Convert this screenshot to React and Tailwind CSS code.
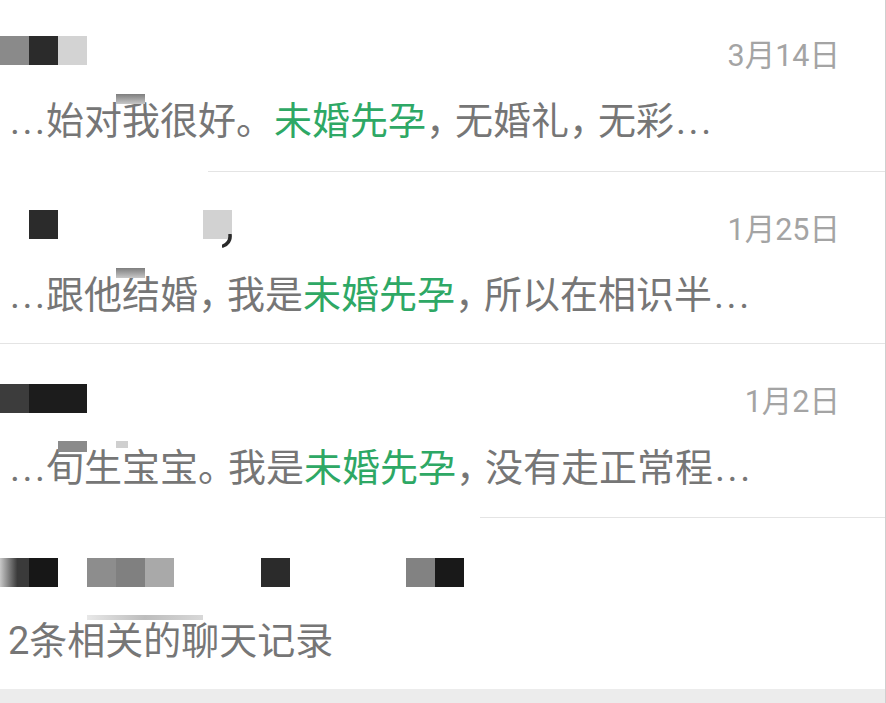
import React from "react";

const G = "text-[#2ea865]";

function Blocks({ cells }) {
  return (
    <div className="flex h-[29px]">
      {cells.map((c, i) => (
        <div key={i} className="w-[29px] h-[29px]" style={{ background: c || "transparent" }} />
      ))}
    </div>
  );
}

function C() {
  return <span className="tracking-[-9px]">，</span>;
}

function Ell() {
  return <span className="inline-block w-[38px] pl-[2px] tracking-[2.5px] font-['Roboto',sans-serif]">...</span>;
}

export default function App() {
  return (
    <div className="w-[886px] h-[703px] bg-white overflow-hidden relative border-r border-[#cfcfcf] font-['Roboto','Noto_Sans_CJK_SC',sans-serif] flex flex-col">
      {/* Row 1 */}
      <div className="relative h-[171px] pt-[36px] pl-0 pr-[45px] shrink-0">
        <div className="flex justify-between items-start h-[40px]">
          <Blocks cells={["#8a8a8a", "#2b2b2b", "#d3d3d3"]} />
          <span className="text-[30.5px] leading-[40px] text-[#a4a4a4]">3月14日</span>
        </div>
        <div className="mt-[21px] pl-[8px] text-[38px] leading-[48px] text-[#767676] whitespace-nowrap">
          <Ell />始对我很好。<span className={G}>未婚先孕</span><C />无婚礼<C />无彩<Ell />
        </div>
        <div className="absolute left-[116px] top-[94px] w-[29px] h-[10px] bg-gradient-to-b from-[#7e7e7e] to-[#c8c8c8]" />
      </div>
      <div className="h-px bg-[#e4e4e4] ml-[208px] shrink-0" />

      {/* Row 2 */}
      <div className="relative h-[171px] pt-[38px] pr-[45px] shrink-0">
        <div className="flex justify-between items-start h-[40px]">
          <div className="flex items-start">
            <Blocks cells={[null, "#2b2b2b", null, null, null, null, null, "#d2d2d2"]} />
            <svg width="12" height="14" viewBox="0 0 12 14" className="mt-[24px] ml-[-10px]">
              <path d="M8 1 C8.5 6 6 10 1 12" stroke="#2a2a2a" strokeWidth="3.5" fill="none" strokeLinecap="round" />
            </svg>
          </div>
          <span className="text-[30.5px] leading-[40px] text-[#a4a4a4]">1月25日</span>
        </div>
        <div className="mt-[21px] pl-[8px] text-[38px] leading-[48px] text-[#767676] whitespace-nowrap">
          <Ell />跟他结婚<C />我是<span className={G}>未婚先孕</span><C />所以在相识半<Ell />
        </div>
        <div className="absolute left-[116px] top-[96px] w-[29px] h-[10px] bg-gradient-to-b from-[#7e7e7e] to-[#c8c8c8]" />
      </div>
      <div className="h-px bg-[#e4e4e4] shrink-0" />

      {/* Row 3 */}
      <div className="relative h-[173px] pt-[40px] pr-[45px] shrink-0">
        <div className="flex justify-between items-start h-[40px]">
          <Blocks cells={["#3c3c3c", "#1c1c1c", "#1c1c1c"]} />
          <span className="text-[30.5px] leading-[36px] text-[#a4a4a4]">1月2日</span>
        </div>
        <div className="mt-[20px] pl-[8px] text-[38px] leading-[48px] text-[#767676] whitespace-nowrap">
          <Ell />旬生宝宝<span className="tracking-[-8px]">。</span>我是<span className={G}>未婚先孕</span><C />没有走正常程<Ell />
        </div>
        <div className="absolute left-[58px] top-[97px] w-[29px] h-[11px] bg-[#8a8a8a]" />
        <div className="absolute left-[116px] top-[97px] w-[12px] h-[7px] bg-[#cfcfcf]" />
      </div>
      <div className="h-px bg-[#e4e4e4] ml-[480px] shrink-0" />

      {/* Row 4 */}
      <div className="relative flex-1 pt-[40px] pr-[45px]">
        <div className="flex items-start h-[40px]">
          <Blocks
            cells={[
              "linear-gradient(90deg,#c8c8c8,#3a3a3a 60%)",
              "#171717",
              null,
              "#8d8d8d",
              "#808080",
              "#a9a9a9",
              null,
              null,
              null,
              "#2b2b2b",
              null,
              null,
              null,
              null,
              "#828282",
              "#191919",
            ]}
          />
        </div>
        <div className="mt-[19px] pl-[8px] text-[38px] leading-[48px] text-[#767676] whitespace-nowrap">
          2条相关的聊天记录
        </div>
        <div className="absolute left-[87px] top-[97px] w-[116px] h-[5px] bg-gradient-to-r from-[#e8e8e8] via-[#bdbdbd] to-[#d8d8d8]" />
      </div>
      <div className="h-[14px] bg-[#ececec] shrink-0" />
    </div>
  );
}
